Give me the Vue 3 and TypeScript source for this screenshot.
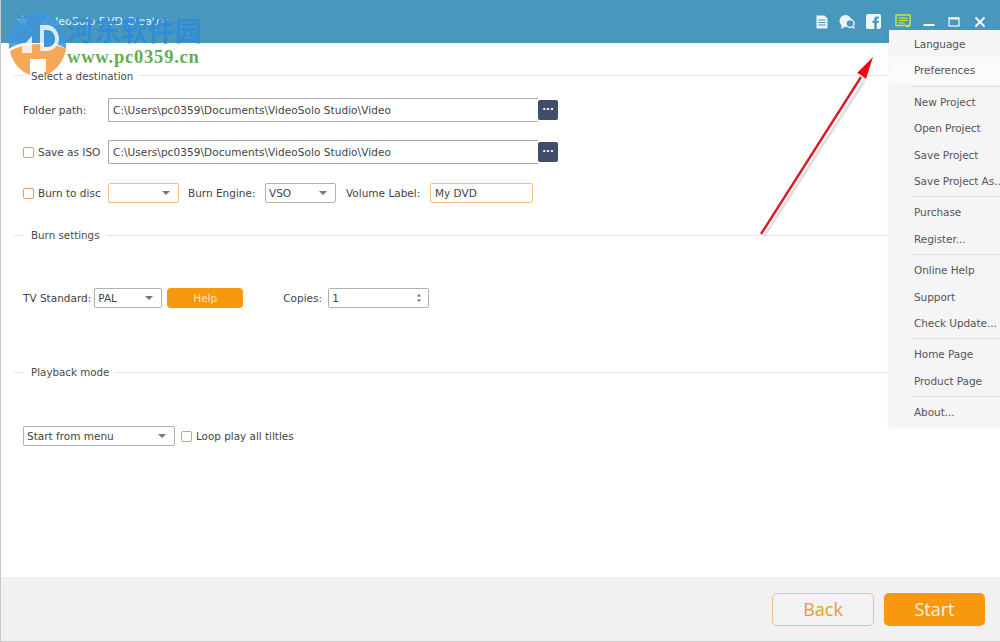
<script setup lang="ts">
const menuGroups: string[][] = [
  ['Language', 'Preferences'],
  ['New Project', 'Open Project', 'Save Project', 'Save Project As...'],
  ['Purchase', 'Register...'],
  ['Online Help', 'Support', 'Check Update...'],
  ['Home Page', 'Product Page'],
  ['About...']
]
const path = 'C:\\Users\\pc0359\\Documents\\VideoSolo Studio\\Video'
</script>

<template>
  <div class="window">
    <header class="titlebar">
      <div class="title">
        <svg class="app-icon" width="14" height="14" viewBox="0 0 14 14"><path d="M7 1l1.600 4 4.200.2-3.300 2.600 1.200 4.100L7 9.600l-3.700 2.300 1.200-4.100L1.200 5.200 5.400 5z" fill="#e8f2f7" /></svg>
        <span>VideoSolo DVD Creator</span>
      </div>
      <div class="tools">
        <svg width="16" height="16" viewBox="0 0 16 16"><path d="M2.500 1.500h8l3 3v10h-11z" fill="#e9f3f8" /><path d="M4.500 6h7M4.500 8.500h7M4.500 11h7" stroke="#4a97bd" stroke-width="1.200" /></svg>
        <svg width="17" height="16" viewBox="0 0 17 16"><circle cx="6.500" cy="7" r="6" fill="#e9f3f8" /><path d="M3 11l-1 4 4-2z" fill="#e9f3f8" /><circle cx="11" cy="9.500" r="4" fill="#4a97bd" stroke="#e9f3f8" stroke-width="1.500" /><path d="M13.500 12.500l2 2" stroke="#e9f3f8" stroke-width="1.500" /></svg>
        <svg width="15" height="15" viewBox="0 0 15 15"><rect width="15" height="15" rx="2" fill="#f1f6f9" /><path d="M10.800 15V9h2V6.800h-2V5.500c0-.7.300-1 1-1h1.100V2.400h-1.800c-2 0-2.800 1.100-2.800 2.800v1.600H6.500V9h1.800v6z" fill="#4a97bd" /></svg>
        <svg width="16" height="15" viewBox="0 0 16 15"><rect x="1" y="1" width="14" height="10.500" fill="none" stroke="#c8e63c" stroke-width="1.500" /><path d="M3.500 4.200h9M3.500 6.500h9M3.500 8.800h6" stroke="#c8e63c" stroke-width="1.200" /><path d="M11 12.500h3" stroke="#c8e63c" stroke-width="1.500" /></svg>
        <svg width="12" height="12" viewBox="0 0 12 12"><path d="M.500 9h11" stroke="#eef5f9" stroke-width="2" /></svg>
        <svg width="12" height="12" viewBox="0 0 12 12"><rect x="1" y="2" width="10" height="8" fill="none" stroke="#eef5f9" stroke-width="1.300" /><path d="M1 2.500h10" stroke="#eef5f9" stroke-width="2" /></svg>
        <svg width="12" height="12" viewBox="0 0 12 12"><path d="M1.500 1.500l9 9M10.500 1.500l-9 9" stroke="#f4f9fb" stroke-width="2" /></svg>
      </div>
    </header>

    <main class="content">
      <div class="legend first"><span>Select a destination</span></div>
      <div class="row row-path">
        <label class="name name-folder">Folder path:</label>
        <div class="path-input">{{ path }}</div>
        <button class="dots">···</button>
      </div>
      <div class="row row-iso">
        <span class="check"></span>
        <label class="name name-iso">Save as ISO</label>
        <div class="path-input">{{ path }}</div>
        <button class="dots">···</button>
      </div>
      <div class="row row-burn">
        <span class="check"></span>
        <label class="name name-disc">Burn to disc</label>
        <div class="select orange w-disc"><i class="caret"></i></div>
        <label class="name gap-engine">Burn Engine:</label>
        <div class="select w-engine"><span>VSO</span><i class="caret"></i></div>
        <label class="name gap-volume">Volume Label:</label>
        <div class="text-input orange">My DVD</div>
      </div>

      <div class="legend second"><span>Burn settings</span></div>
      <div class="row row-tv">
        <label class="name">TV Standard:</label>
        <div class="select w-tv"><span>PAL</span><i class="caret"></i></div>
        <button class="help">Help</button>
        <label class="name gap-copies">Copies:</label>
        <div class="select w-copies">
          <span>1</span>
          <svg width="6" height="10" viewBox="0 0 6 10"><path d="M3 1l2 2.500H1zM3 9L1 6.500h4z" fill="#666" /></svg>
        </div>
      </div>

      <div class="legend third"><span>Playback mode</span></div>
      <div class="row row-play">
        <div class="select w-play"><span>Start from menu</span><i class="caret"></i></div>
        <span class="check check-loop"></span>
        <label class="name name-loop">Loop play all tiltles</label>
      </div>
    </main>

    <footer class="footer">
      <button class="big back">Back</button>
      <button class="big start">Start</button>
    </footer>

    <nav class="menu">
      <div v-for="(group, g) in menuGroups" :key="g" class="menu-group">
        <div
          v-for="item in group"
          :key="item"
          class="menu-item"
          :class="{ hover: item === 'Preferences' }"
        >{{ item }}</div>
      </div>
    </nav>

    <svg class="arrow" width="130" height="190" viewBox="0 0 130 190">
      <path d="M13 184L113 29" stroke="#777" stroke-width="3" opacity=".22" transform="translate(1.500 1.500)" />
      <path d="M11 184L111 27" stroke="#d91c22" stroke-width="2.400" />
      <path d="M123 7L116 29 111 25 107 23z" fill="#ee0a10" />
    </svg>

    <div class="watermark">
      <svg class="wm-logo" width="66" height="70" viewBox="0 0 66 70">
        <path d="M5 40C3 18 17 3 33 3s30 13 29 37C50 30 18 30 5 40z" fill="#3d95d8" opacity=".88" />
        <path d="M6 42c12-8 42-10 56-2-2 12-10 22-20 26V50H26v16C15 62 8 52 6 42z" fill="#f5a04a" opacity=".92" />
        <path d="M18 38l10-11v17H18zM36 16h6c9 0 13 8 13 14s-5 12-13 12h-6z" fill="#fff" opacity=".8" />
        <path d="M40 21h3c5 0 8 4 8 9s-3 8-8 8h-3z" fill="#3d95d8" />
      </svg>
      <div class="wm-cn">河东软件园</div>
      <div class="wm-url">www.pc0359.cn</div>
    </div>
  </div>
</template>

<style>
html, body { margin: 0; padding: 0; background: #fff; }
</style>

<style scoped>
.window {
  position: relative;
  width: 1000px;
  height: 642px;
  overflow: hidden;
  display: flex;
  flex-direction: column;
  box-sizing: border-box;
  border-left: 1px solid #c9c9c9;
  font-family: "DejaVu Sans", "Liberation Sans", sans-serif;
  font-size: 10.500px;
  color: #444;
  background: #fff;
}
.titlebar {
  height: 43px;
  flex: none;
  margin-left: -1px;
  background: #4a97bd;
  display: flex;
  align-items: center;
  justify-content: space-between;
  padding: 0 14px 0 15px;
}
.title { display: flex; align-items: center; gap: 11px; color: #e6f0f5; font-size: 11px; padding-bottom: 1px; }
.app-icon { margin-left: 1px; }
.tools { display: flex; align-items: center; gap: 10px; }
.tools svg:nth-child(2) { margin-left: -1px; }
.tools svg:nth-child(4) { margin: 0 2px 0 4px; }
.tools svg:nth-child(5) { margin-right: 3px; }
.tools svg:nth-child(6) { margin-right: 4px; }

.content { flex: 1; padding: 0 0 0 13px; min-height: 0; }
.legend {
  display: flex;
  align-items: center;
  height: 16px;
  font-size: 10.300px;
  color: #4a4a4a;
}
.legend::before { content: ""; width: 10px; height: 1px; background: #e6e6e6; margin-right: 7px; }
.legend::after { content: ""; flex: 1; height: 1px; background: #e6e6e6; margin-left: 6px; }
.first { margin-top: 24px; }
.first span { padding-top: 2px; }
.second { margin-top: 24px; }
.third { margin-top: 56px; }

.row { display: flex; align-items: center; padding-left: 9px; }
.row-path { margin-top: 15px; height: 24px; }
.row-iso { margin-top: 18px; height: 24px; }
.row-burn { margin-top: 19px; height: 20px; }
.row-tv { margin-top: 45px; height: 20px; }
.row-play { margin-top: 46px; height: 20px; }

.name { white-space: nowrap; }
.name-folder { width: 85px; }
.name-iso { width: 70px; margin-left: 4px; }
.name-disc { width: 70px; margin-left: 4px; }
.name-loop { margin-left: 4px; font-size: 10.400px; }
.gap-engine { margin-left: 9px; width: 77px; }
.gap-volume { margin-left: 10px; width: 84px; }
.gap-copies { margin-left: 40px; width: 45px; }

.path-input {
  box-sizing: border-box;
  width: 430px;
  height: 24px;
  line-height: 22px;
  padding-left: 4px;
  border: 1px solid #a9a9a9;
  border-right: none;
  border-radius: 2px 0 0 2px;
  background: #fff;
  white-space: nowrap;
  letter-spacing: .06px;
}
.dots {
  width: 20px;
  height: 20px;
  padding: 0;
  border: none;
  border-radius: 2px;
  background: #3f4d6b;
  color: #fff;
  font: bold 10px "DejaVu Sans", sans-serif;
  line-height: 20px;
}
.check {
  flex: none;
  box-sizing: border-box;
  width: 11px;
  height: 11px;
  border: 1px solid #e2a060;
  border-radius: 2px;
  background: #fff;
}
.check-loop { margin-left: 6px; }
.select {
  box-sizing: border-box;
  flex: none;
  height: 20px;
  display: flex;
  align-items: center;
  justify-content: space-between;
  padding: 0 8px 0 3px;
  border: 1px solid #b0b0b0;
  border-radius: 2px;
  background: #fff;
}
.orange { border-color: #efc27e; }
.caret {
  width: 0;
  height: 0;
  margin-left: auto;
  border-left: 4px solid transparent;
  border-right: 4px solid transparent;
  border-top: 4px solid #777;
}
.w-disc { width: 71px; }
.w-engine { width: 71px; }
.w-tv { width: 68px; margin-left: 3px; }
.w-copies { width: 101px; padding-right: 6px; }
.w-play { width: 152px; }
.text-input {
  box-sizing: border-box;
  width: 103px;
  height: 20px;
  line-height: 18px;
  padding-left: 4px;
  border: 1px solid #efc27e;
  border-radius: 2px;
}
.help {
  width: 76px;
  height: 20px;
  margin-left: 5px;
  padding: 0;
  border: none;
  border-radius: 4px;
  background: #f7980f;
  color: #fbe3c0;
  font: 10.500px "DejaVu Sans", sans-serif;
}

.footer {
  height: 65px;
  flex: none;
  box-sizing: border-box;
  background: #f1f1f1;
  border-bottom: 1px solid #cfcfcf;
  display: flex;
  justify-content: flex-end;
  align-items: flex-start;
  gap: 10px;
  padding: 16px 15px 0 0;
}
.big {
  box-sizing: border-box;
  height: 33px;
  padding: 0 0 1px;
  border-radius: 5px;
  font: 18px "Open Sans", sans-serif;
}
.back { width: 102px; background: #f3f3f3; border: 1px solid #e8c48c; color: #e0a030; }
.start { width: 101px; background: #f7980f; border: none; color: #fdf0dc; }

.menu {
  position: absolute;
  left: 888px;
  top: 30px;
  width: 111px;
  height: 397px;
  box-sizing: border-box;
  background: #f5f5f5;
  padding-top: 1px;
  overflow: hidden;
  box-shadow: -1px 1px 2px rgba(0, 0, 0, .04);
}
.menu-group + .menu-group { position: relative; margin-top: 2px; padding-top: 3px; }
.menu-group + .menu-group::before {
  content: "";
  position: absolute;
  left: 23px;
  right: 0;
  top: 0;
  height: 1px;
  background: #dcdcdc;
}
.menu-item {
  height: 26.400px;
  line-height: 26.400px;
  padding-left: 25px;
  white-space: nowrap;
  font-size: 10.500px;
  letter-spacing: -.06px;
  color: #555;
}
.hover { background: #fbfbfb; }

.arrow { position: absolute; left: 749px; top: 50px; pointer-events: none; }

.watermark { position: absolute; left: 0; top: 0; width: 210px; height: 75px; pointer-events: none; }
.wm-logo { position: absolute; left: 3px; top: 9px; filter: blur(.4px); }
.wm-cn {
  position: absolute;
  left: 66px;
  top: 12px;
  font: bold 27px "Noto Sans CJK SC", sans-serif;
  line-height: 36px;
  color: #2b8bdc;
  opacity: .9;
  white-space: nowrap;
}
.wm-url {
  position: absolute;
  left: 66px;
  top: 47px;
  font: bold 18.500px "Liberation Serif", serif;
  line-height: 20px;
  letter-spacing: .8px;
  color: #62ae53;
  white-space: nowrap;
}
</style>
